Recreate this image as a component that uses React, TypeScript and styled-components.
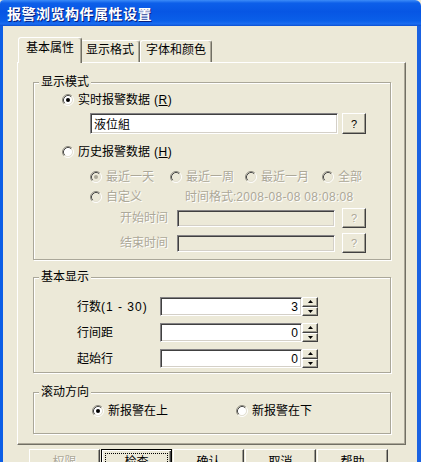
import styled, { createGlobalStyle } from "styled-components";

const GlobalStyle = createGlobalStyle`
  html, body {
    margin: 0;
    padding: 0;
    background: #ece9d8;
  }
  body {
    font-family: "Liberation Sans", "Noto Sans CJK SC", sans-serif;
    font-size: 12px;
    color: #000;
    text-autospace: no-autospace;
  }
  * {
    box-sizing: border-box;
  }
`;

const Window = styled.div`
  width: 421px;
  height: 462px;
  overflow: hidden;
  display: flex;
  flex-direction: column;
`;

const TitleBar = styled.div`
  flex: none;
  height: 26px;
  display: flex;
  align-items: center;
  padding: 0 0 1px 7px;
  border-radius: 4px 6px 0 0;
  background: linear-gradient(
    180deg,
    #3c8cf8 0%,
    #0d5fe9 12%,
    #0756e4 45%,
    #0a5fe9 80%,
    #1b6df0 92%,
    #0b4fd1 100%
  );
  color: #fff;
  font-size: 14px;
  font-weight: bold;
  letter-spacing: 0.5px;
  text-shadow: 1px 1px 0 #0a1e7a;
`;

const Body = styled.div`
  flex: 1;
  background: #ece9d8;
  border-left: 3px solid #0c5ee6;
  border-right: 4px solid #1a62e2;
  padding-left: 14px;
`;

const TabRow = styled.div`
  position: relative;
  z-index: 1;
  display: flex;
  align-items: flex-end;
  height: 26px;
  margin: 11px 0 -1px 3px;
`;

const Tab = styled.div<{ $active?: boolean }>`
  position: relative;
  z-index: ${(p) => (p.$active ? 2 : 1)};
  display: flex;
  align-items: flex-start;
  height: ${(p) => (p.$active ? 26 : 22)}px;
  margin: ${(p) => (p.$active ? "0 -2px 0 -2px" : "0 0 1px 0")};
  padding: ${(p) => (p.$active ? "3px 7px 0" : "2px 5px 0")};
  line-height: 14px;
  background: #ece9d8;
  border: 1px solid;
  border-color: #fff #716f64 transparent #fff;
  border-bottom: none;
  border-radius: 3px 3px 0 0;
  box-shadow: inset -1px 0 0 #aca899;
  white-space: nowrap;
`;

const Panel = styled.div`
  width: 389px;
  display: flex;
  flex-direction: column;
  padding: 0 14px 10px 15px;
  background: #ece9d8;
  border: 1px solid;
  border-color: #fff #716f64 #716f64 #fff;
  box-shadow: inset -1px -1px 0 #aca899;
`;

const Group = styled.fieldset<{ $top: number; $pt: number; $pb: number }>`
  min-width: 0;
  margin: ${(p) => p.$top}px 0 0;
  padding: ${(p) => p.$pt}px 0 ${(p) => p.$pb}px;
  border: 1px solid #aaa799;
  box-shadow: inset 1px 1px 0 #fff, 1px 1px 0 #fff;
`;

const Legend = styled.legend`
  margin-left: 5px;
  padding: 0 2px;
  line-height: 14px;
  background: #ece9d8;
`;

const Line = styled.div<{ $indent: number; $mt?: number; $h?: number }>`
  display: flex;
  align-items: center;
  height: ${(p) => p.$h ?? 16}px;
  margin-top: ${(p) => p.$mt ?? 0}px;
  padding-left: ${(p) => p.$indent}px;
`;

const Option = styled.label<{ $disabled?: boolean; $w?: number }>`
  display: inline-flex;
  align-items: center;
  gap: 4px;
  flex: none;
  width: ${(p) => (p.$w ? `${p.$w}px` : "auto")};
  line-height: 14px;
  white-space: nowrap;
  color: ${(p) => (p.$disabled ? "#aca899" : "#000")};
  text-shadow: ${(p) => (p.$disabled ? "1px 1px 0 #fff" : "none")};
`;

const Mnemonic = styled.span`
  margin-left: 4px;
  font-family: "Liberation Sans", sans-serif;
  letter-spacing: 0.5px;
`;

const Caption = styled.span<{ $disabled?: boolean; $w?: number }>`
  flex: none;
  width: ${(p) => (p.$w ? `${p.$w}px` : "auto")};
  white-space: pre;
  line-height: 14px;
  color: ${(p) => (p.$disabled ? "#aca899" : "#000")};
  text-shadow: ${(p) => (p.$disabled ? "1px 1px 0 #fff" : "none")};
`;

const Latin = styled.span<{ $spacing: number }>`
  letter-spacing: ${(p) => p.$spacing}px;
`;

const RadioMark = styled.svg`
  flex: none;
  display: block;
`;

const TextBox = styled.div<{ $w: number; $h: number; $disabled?: boolean; $right?: boolean }>`
  flex: none;
  width: ${(p) => p.$w}px;
  height: ${(p) => p.$h}px;
  display: flex;
  align-items: center;
  justify-content: ${(p) => (p.$right ? "flex-end" : "flex-start")};
  padding: 0 3px;
  background: ${(p) => (p.$disabled ? "#ece9d8" : "#fff")};
  border: 1px solid;
  border-color: #848284 #fff #fff #848284;
  box-shadow: inset 1px 1px 0 #404040, inset -1px -1px 0 #d4d0c8;
  white-space: nowrap;
`;

const HelpButton = styled.div<{ $h: number; $ml: number; $disabled?: boolean }>`
  flex: none;
  width: 24px;
  height: ${(p) => p.$h}px;
  margin-left: ${(p) => p.$ml}px;
  display: flex;
  align-items: center;
  justify-content: center;
  background: #ece9d8;
  border: 1px solid;
  border-color: #fff #404040 #404040 #fff;
  box-shadow: inset -1px -1px 0 #9d9b8f;
  color: ${(p) => (p.$disabled ? "#aca899" : "#000")};
  text-shadow: ${(p) => (p.$disabled ? "1px 1px 0 #fff" : "none")};
  font-size: 11px;
`;

const Spinner = styled.div`
  flex: none;
  width: 16px;
  height: 19px;
  display: flex;
  flex-direction: column;
`;

const SpinButton = styled.div`
  flex: 1;
  display: flex;
  align-items: center;
  justify-content: center;
  background: #ece9d8;
  border: 1px solid;
  border-color: #fff #404040 #404040 #fff;
  box-shadow: inset -1px -1px 0 #9d9b8f;
`;

const ButtonRow = styled.div`
  display: flex;
  gap: 1px;
  margin: 4px 0 0 12px;
`;

const Button = styled.div<{ $disabled?: boolean; $default?: boolean }>`
  flex: none;
  width: 71px;
  height: 23px;
  display: flex;
  align-items: center;
  justify-content: center;
  padding: 3px;
  background: #ece9d8;
  border: 1px solid;
  border-color: ${(p) => (p.$default ? "#000" : "#fff #404040 #404040 #fff")};
  box-shadow: ${(p) =>
    p.$default
      ? "inset 1px 1px 0 #fff, inset -1px -1px 0 #404040, inset -2px -2px 0 #9d9b8f"
      : "inset -1px -1px 0 #9d9b8f"};
  color: ${(p) => (p.$disabled ? "#aca899" : "#000")};
  text-shadow: ${(p) => (p.$disabled ? "1px 1px 0 #fff" : "none")};
`;

const FocusRing = styled.span<{ $on?: boolean }>`
  flex: 1;
  align-self: stretch;
  display: flex;
  align-items: center;
  justify-content: center;
  border: 1px dotted ${(p) => (p.$on ? "#000" : "transparent")};
`;

const Radio = ({ checked = false, disabled = false }: { checked?: boolean; disabled?: boolean }) => (
  <RadioMark width="12" height="12" viewBox="0 0 12 12">
    <circle cx="6" cy="6" r="4.2" fill={disabled ? "#ece9d8" : "#fff"} />
    <path d="M2.11 9.89A5.5 5.5 0 0 1 9.89 2.11" stroke="#8d8b80" fill="none" />
    <path d="M9.89 2.11A5.5 5.5 0 0 1 2.11 9.89" stroke="#fff" fill="none" />
    <path d="M2.82 9.18A4.5 4.5 0 0 1 9.18 2.82" stroke="#4a4a4a" fill="none" />
    <path d="M9.18 2.82A4.5 4.5 0 0 1 2.82 9.18" stroke="#e4e1d5" fill="none" />
    {checked && <circle cx="6" cy="6" r="2" fill={disabled ? "#aca899" : "#000"} />}
  </RadioMark>
);

const Arrow = ({ up }: { up?: boolean }) => (
  <svg width="5" height="3" viewBox="0 0 5 3">
    <path d={up ? "M2.5 0L5 3H0z" : "M0 0h5L2.5 3z"} fill="#000" />
  </svg>
);

const NumberField = ({ value }: { value: number }) => (
  <>
    <TextBox $w={142} $h={19} $right>
      {value}
    </TextBox>
    <Spinner>
      <SpinButton>
        <Arrow up />
      </SpinButton>
      <SpinButton>
        <Arrow />
      </SpinButton>
    </Spinner>
  </>
);

const App = () => {
  return (
    <>
      <GlobalStyle />
      <Window>
        <TitleBar>报警浏览构件属性设置</TitleBar>
        <Body>
          <TabRow>
            <Tab $active>基本属性</Tab>
            <Tab>显示格式</Tab>
            <Tab>字体和颜色</Tab>
          </TabRow>
          <Panel>
            <Group $top={12} $pt={3} $pb={6}>
              <Legend>显示模式</Legend>
              <Line $indent={28}>
                <Option>
                  <Radio checked />
                  <span>
                    实时报警数据
                    <Mnemonic>
                      (<u>R</u>)
                    </Mnemonic>
                  </span>
                </Option>
              </Line>
              <Line $indent={56} $mt={5} $h={21}>
                <TextBox $w={248} $h={21}>
                  液位組
                </TextBox>
                <HelpButton $h={21} $ml={4}>
                  ?
                </HelpButton>
              </Line>
              <Line $indent={28} $mt={10}>
                <Option>
                  <Radio />
                  <span>
                    历史报警数据
                    <Mnemonic>
                      (<u>H</u>)
                    </Mnemonic>
                  </span>
                </Option>
              </Line>
              <Line $indent={56} $mt={9}>
                <Option $disabled $w={80}>
                  <Radio checked disabled />
                  最近一天
                </Option>
                <Option $disabled $w={75}>
                  <Radio disabled />
                  最近一周
                </Option>
                <Option $disabled $w={77}>
                  <Radio disabled />
                  最近一月
                </Option>
                <Option $disabled>
                  <Radio disabled />
                  全部
                </Option>
              </Line>
              <Line $indent={56} $mt={4}>
                <Option $disabled $w={95}>
                  <Radio disabled />
                  自定义
                </Option>
                <Caption $disabled>
                  时间格式:<Latin $spacing={0.3}>2008-08-08 08:08:08</Latin>
                </Caption>
              </Line>
              <Line $indent={86} $mt={3} $h={20}>
                <Caption $disabled $w={57}>
                  开始时间
                </Caption>
                <TextBox $w={158} $h={17} $disabled />
                <HelpButton $h={20} $ml={7} $disabled>
                  ?
                </HelpButton>
              </Line>
              <Line $indent={86} $mt={5} $h={20}>
                <Caption $disabled $w={57}>
                  结束时间
                </Caption>
                <TextBox $w={158} $h={17} $disabled />
                <HelpButton $h={20} $ml={7} $disabled>
                  ?
                </HelpButton>
              </Line>
            </Group>

            <Group $top={10} $pt={13} $pb={4}>
              <Legend>基本显示</Legend>
              <Line $indent={43} $h={19}>
                <Caption $w={83}>
                  行数<Latin $spacing={1}>(1 - 30)</Latin>
                </Caption>
                <NumberField value={3} />
              </Line>
              <Line $indent={43} $mt={7} $h={19}>
                <Caption $w={83}>行间距</Caption>
                <NumberField value={0} />
              </Line>
              <Line $indent={43} $mt={7} $h={19}>
                <Caption $w={83}>起始行</Caption>
                <NumberField value={0} />
              </Line>
            </Group>

            <Group $top={12} $pt={4} $pb={14}>
              <Legend>滚动方向</Legend>
              <Line $indent={58}>
                <Option $w={144}>
                  <Radio checked />
                  新报警在上
                </Option>
                <Option>
                  <Radio />
                  新报警在下
                </Option>
              </Line>
            </Group>
          </Panel>
          <ButtonRow>
            <Button $disabled>
              <FocusRing>权限</FocusRing>
            </Button>
            <Button $default>
              <FocusRing $on>检查</FocusRing>
            </Button>
            <Button>
              <FocusRing>确认</FocusRing>
            </Button>
            <Button>
              <FocusRing>取消</FocusRing>
            </Button>
            <Button>
              <FocusRing>帮助</FocusRing>
            </Button>
          </ButtonRow>
        </Body>
      </Window>
    </>
  );
};

export default App;
